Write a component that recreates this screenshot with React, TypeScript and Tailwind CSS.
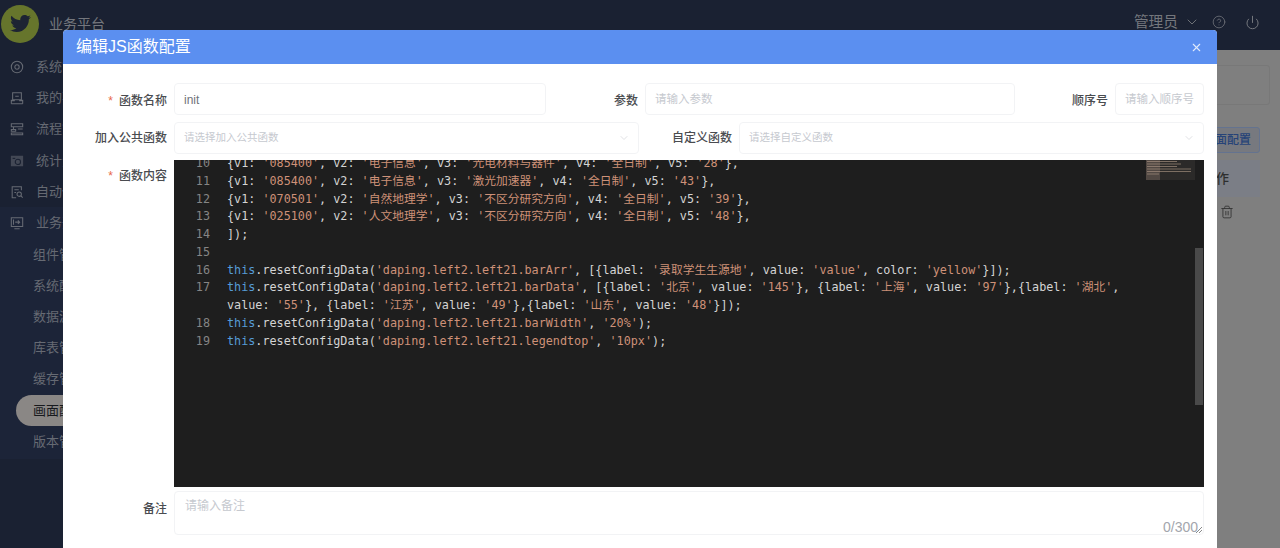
import React from "react";
import { FaTwitter } from "react-icons/fa";
import { ChevronDown, CircleHelp, Power, X, Trash2 } from "lucide-react";

const ui = "font-['Liberation_Sans','Noto_Sans_CJK_SC',sans-serif]";

const S = ({ children }: { children: React.ReactNode }) => <span className="text-[#ce9178]">{children}</span>;
const T = () => <span className="text-[#569cd6]">this</span>;

const rowData = (a: string, b: string, c: string, d: string, e: string) => (
  <>
    {"{v1: "}<S>{`'${a}'`}</S>{", v2: "}<S>{`'${b}'`}</S>{", v3: "}<S>{`'${c}'`}</S>{", v4: "}<S>{`'${d}'`}</S>{", v5: "}<S>{`'${e}'`}</S>{"},"}
  </>
);

const lines: { n: number; c: React.ReactNode; wrap?: React.ReactNode }[] = [
  { n: 10, c: rowData("085400", "电子信息", "光电材料与器件", "全日制", "28") },
  { n: 11, c: rowData("085400", "电子信息", "激光加速器", "全日制", "43") },
  { n: 12, c: rowData("070501", "自然地理学", "不区分研究方向", "全日制", "39") },
  { n: 13, c: rowData("025100", "人文地理学", "不区分研究方向", "全日制", "48") },
  { n: 14, c: "]);" },
  { n: 15, c: "" },
  {
    n: 16,
    c: (
      <>
        <T />{".resetConfigData("}<S>'daping.left2.left21.barArr'</S>{", [{label: "}<S>'录取学生生源地'</S>{", value: "}<S>'value'</S>{", color: "}<S>'yellow'</S>{"}]);"}
      </>
    ),
  },
  {
    n: 17,
    c: (
      <>
        <T />{".resetConfigData("}<S>'daping.left2.left21.barData'</S>{", [{label: "}<S>'北京'</S>{", value: "}<S>'145'</S>{"}, {label: "}<S>'上海'</S>{", value: "}<S>'97'</S>{"},{label: "}<S>'湖北'</S>{","}
      </>
    ),
    wrap: (
      <>
        {"value: "}<S>'55'</S>{"}, {label: "}<S>'江苏'</S>{", value: "}<S>'49'</S>{"},{label: "}<S>'山东'</S>{", value: "}<S>'48'</S>{"}]);"}
      </>
    ),
  },
  { n: 18, c: (<><T />{".resetConfigData("}<S>'daping.left2.left21.barWidth'</S>{", "}<S>'20%'</S>{");"}</>) },
  { n: 19, c: (<><T />{".resetConfigData("}<S>'daping.left2.left21.legendtop'</S>{", "}<S>'10px'</S>{");"}</>) },
];

const icons = [
  <svg key="0" viewBox="0 0 16 16" className="w-[14px] h-[14px]" fill="none" stroke="currentColor" strokeWidth="1.2"><circle cx="8" cy="8" r="6.5" /><circle cx="8" cy="8" r="2.5" /></svg>,
  <svg key="1" viewBox="0 0 16 16" className="w-[14px] h-[14px]" fill="none" stroke="currentColor" strokeWidth="1.2"><path d="M3 2h10v8H3zM1.5 14.5h13M1.5 10v4.5M14.5 10v4.5M1.5 11h4M10.5 11h4M6 6h4" /></svg>,
  <svg key="2" viewBox="0 0 16 16" className="w-[14px] h-[14px]" fill="none" stroke="currentColor" strokeWidth="1.2"><path d="M1.5 2h13v3.5h-13zM1.5 8.5h5v2h-5zM1.5 12.5h13v2h-13zM9 8h5.5M4 5.5v3" /></svg>,
  <svg key="3" viewBox="0 0 16 16" className="w-[14px] h-[14px]"><path fill="currentColor" d="M1 2h14v12H1z" opacity=".55" /><circle cx="9" cy="9" r="3" fill="none" stroke="#1a2132" strokeWidth="1.2" /><path d="M3 5h3" stroke="#1a2132" strokeWidth="1.2" /></svg>,
  <svg key="4" viewBox="0 0 16 16" className="w-[14px] h-[14px]" fill="none" stroke="currentColor" strokeWidth="1.2"><path d="M13 6V2H2.5v12.5H7M5 5.5h5M5 8.5h2" /><circle cx="10.5" cy="10.5" r="2.5" /><path d="M12.5 12.5l2 2" /></svg>,
  <svg key="5" viewBox="0 0 16 16" className="w-[14px] h-[14px]" fill="none" stroke="currentColor" strokeWidth="1.2"><path d="M1.5 2h13v10h-13zM5 14.5h6" /><path d="M6 7h5M9 5l2 2-2 2M4 4v6" /></svg>,
];

const mainMenu = ["系统管理", "我的事务", "流程管理", "统计分析", "自动任务", "业务开发"];
const subMenu = ["组件管理", "系统配置", "数据源", "库表管理", "缓存管理", "画面配置", "版本管理"];

const Label = ({ w, req, nudge, children }: { w: string; req?: boolean; nudge?: string; children: React.ReactNode }) => (
  <div className={`${w} ${nudge ?? ""} shrink-0 flex items-center justify-end pr-[7px] h-8 text-xs font-medium text-[#4a4c50]`}>
    {req && <span className="text-[#e8694a] mr-[6px]">*</span>}
    {children}
  </div>
);

const Field = ({ w, children, ph }: { w: string; children?: React.ReactNode; ph?: string }) => (
  <div className={`${w} shrink-0 h-8 pt-[1px] border border-[#f2f3f5] rounded-[4px] flex items-center px-[9px] whitespace-nowrap ${ph ? "text-[11.5px] text-[#c6c9cf]" : "text-xs text-[#70737a]"}`}>
    {ph || children}
  </div>
);

const Select = ({ w, ph }: { w: string; ph: string }) => (
  <div className={`${w} shrink-0 h-8 border border-[#f2f3f5] rounded-[4px] flex items-center justify-between pl-[9px] pr-[8px] text-[10.5px] text-[#c6c9cf]`}>
    {ph}
    <ChevronDown className="w-3 h-3 text-[#d5d7db]" strokeWidth={1.5} />
  </div>
);

export default function App() {
  return (
    <div className={`relative w-[1280px] h-[548px] overflow-hidden bg-[#1a2132] ${ui}`}>
      <header className="h-[50px] flex items-center justify-between text-[#74777d]">
        <div className="flex items-center -mt-[3px]">
          <div className="w-[38px] h-[38px] ml-[1px] rounded-full bg-[#66752c] flex items-center justify-center">
            <FaTwitter className="w-[21px] h-[21px] text-[#1d2433]" />
          </div>
          <span className="ml-[10px] text-sm">业务平台</span>
        </div>
        <div className="flex items-center pr-[20px] -mt-[5px]">
          <span className="text-[14.7px]">管理员</span>
          <ChevronDown className="w-4 h-4 ml-[6px]" strokeWidth={1.4} />
          <CircleHelp className="w-[14px] h-[14px] ml-[12px]" strokeWidth={1.3} />
          <Power className="w-[15px] h-[15px] ml-[19px]" strokeWidth={1.6} />
        </div>
      </header>

      <div className="flex h-[498px]">
        <aside className="w-[220px] shrink-0 text-[#666a73] text-[13px]">
          <div className="pt-[1px]">
            {mainMenu.map((m, i) => (
              <div key={m} className={`h-[31.3px] flex items-center pl-[10px] ${i === 5 ? "bg-[#1c2438]" : ""}`}>
                <span className="w-[14px] mr-[12px]">{icons[i]}</span>
                {m}
              </div>
            ))}
          </div>
          <div className="bg-[#1c2438] pb-[2px]">
            {subMenu.map((m, i) => (
              <div key={m} className={`h-[31.2px] flex items-center pl-[33px] relative ${i === 5 ? "text-[#17191d]" : ""}`}>
                {i === 5 && <span className="absolute left-[16px] right-0 top-0 bottom-0 rounded-l-full bg-[#8a8785]" />}
                <span className="relative">{m}</span>
              </div>
            ))}
          </div>
        </aside>

        <main className="flex-1 bg-[#7f7f7f] min-w-0 flex justify-end">
          <div className="w-[1050px] pr-[10px] pt-[15px] text-[#3a3a3a]">
            <div className="h-[40px] border border-[#787878] rounded-[3px]" />
            <div className="flex justify-end pr-[10px] mt-[22px]">
              <div className="h-[26px] px-[8px] border border-[#64738f] bg-[#77797f] rounded-[3px] flex items-center text-xs font-medium text-[#264378]">画面配置</div>
            </div>
            <div className="mr-[10px] mt-[7px] h-[37px] bg-[#7b7e86] flex items-center justify-end pr-[31px] text-[13px] font-medium text-[#2e2e2e]">操作</div>
            <div className="mr-[10px] flex justify-end pr-[26px] pt-[8px]">
              <Trash2 className="w-[14px] h-[14px] text-[#333]" strokeWidth={1.5} />
            </div>
          </div>
        </main>
      </div>

      <section className="absolute left-[63px] top-[30px] w-[1154px] h-[560px] bg-white rounded-t-[4px] overflow-hidden">
        <div className="h-[34px] bg-[#5b8ff0] flex items-center justify-between pl-[13px] pr-[14px] text-white">
          <span className="text-base">编辑JS函数配置</span>
          <X className="w-[13px] h-[13px] text-[#dfe9fb]" strokeWidth={2} />
        </div>

        <div className="pt-[19px]">
          <div className="flex">
            <Label w="w-[111px]" req nudge="pt-[3px]">函数名称</Label>
            <Field w="w-[372px]">init</Field>
            <Label w="w-[99px]" nudge="pt-[3px]">参数</Label>
            <Field w="w-[370px]" ph="请输入参数" />
            <Label w="w-[100px]" nudge="pt-[3px]">顺序号</Label>
            <Field w="w-[89px]" ph="请输入顺序号" />
          </div>

          <div className="flex mt-[7px]">
            <Label w="w-[111px]">加入公共函数</Label>
            <Select w="w-[465px]" ph="请选择加入公共函数" />
            <Label w="w-[100px]">自定义函数</Label>
            <Select w="w-[465px]" ph="请选择自定义函数" />
          </div>

          <div className="flex mt-[6px]">
            <Label w="w-[111px]" req>函数内容</Label>
            <div className="relative w-[1030px] h-[327px] bg-[#1e1e1e] overflow-hidden font-['DejaVu_Sans_Mono','Noto_Sans_CJK_SC',monospace] text-[11.78px] leading-[17.77px] text-[#d4d4d4]">
              <div className="-mt-[5px]">
                {lines.map((l) => (
                  <React.Fragment key={l.n}>
                    <div className="flex h-[17.77px] whitespace-pre">
                      <span className="w-[36px] text-right text-[#858585] shrink-0">{l.n}</span>
                      <span className="ml-[17px]">{l.c}</span>
                    </div>
                    {l.wrap && (
                      <div className="flex h-[17.77px] whitespace-pre">
                        <span className="w-[36px] shrink-0" />
                        <span className="ml-[17px]">{l.wrap}</span>
                      </div>
                    )}
                  </React.Fragment>
                ))}
              </div>
              <svg className="absolute right-[9px] top-0 w-[49px] h-[20px]" viewBox="0 0 49 20">
                <rect width="49" height="20" fill="#2b2a29" />
                <path d="M1 1.5h30M1 4h34M1 6.5h30M1 9h44M1 11.5h44M1 14h12" stroke="#7d6f63" strokeWidth="1" />
                <rect x="0" y="0" width="14" height="20" fill="#a89080" opacity=".3" />
              </svg>
              <div className="absolute right-[1px] top-[88px] w-[8px] h-[157px] bg-[#4a4a4a]" />
            </div>
          </div>

          <div className="flex mt-[4px]">
            <Label w="w-[111px]" nudge="pt-[4px]">备注</Label>
            <div className="relative w-[1030px] h-[44px] border border-[#f2f3f5] rounded-[4px] px-[10px] pt-[6px] text-xs text-[#c6c9cf]">
              请输入备注
              <span className="absolute right-[5px] bottom-0 text-sm text-[#a3a6ad] leading-none">0/300</span>
              <svg className="absolute right-[1px] bottom-[1px] w-[6px] h-[6px]" viewBox="0 0 6 6"><path d="M0 6L6 0M3 6L6 3" stroke="#8a8a8a" strokeWidth="1" /></svg>
            </div>
          </div>
        </div>
      </section>
    </div>
  );
}
